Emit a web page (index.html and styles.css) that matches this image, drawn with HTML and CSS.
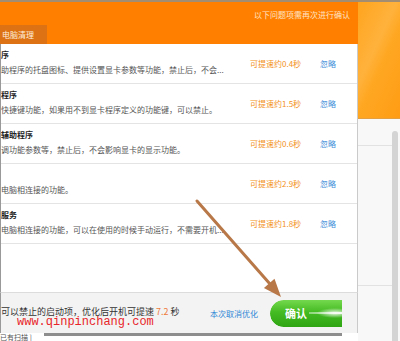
FILE: index.html
```html
<!DOCTYPE html>
<html lang="zh-CN">
<head>
    <meta charset="UTF-8">
    <title>开机加速</title>
    <link rel="stylesheet" href="styles.css">
</head>
<body>
    <div class="screen">
        <div class="main">
            <div class="dialog">
                <div class="dlg_head">
                    <p class="note">以下问题项需再次进行确认</p>
                    <div class="tab">电脑清理</div>
                </div>
                <div class="list">
                    <div class="row">
                        <div class="info">
                            <p class="name">序</p>
                            <p class="desc">助程序的托盘图标、提供设置显卡参数等功能，禁止后，不会...</p>
                        </div>
                        <span class="gain">可提速约0.4秒</span>
                        <a class="ignore">忽略</a>
                    </div>
                    <div class="row">
                        <div class="info">
                            <p class="name">程序</p>
                            <p class="desc">快捷键功能，如果用不到显卡程序定义的功能键，可以禁止。</p>
                        </div>
                        <span class="gain">可提速约1.5秒</span>
                        <a class="ignore">忽略</a>
                    </div>
                    <div class="row">
                        <div class="info">
                            <p class="name">辅助程序</p>
                            <p class="desc">调功能参数等，禁止后，不会影响显卡的显示功能。</p>
                        </div>
                        <span class="gain">可提速约0.6秒</span>
                        <a class="ignore">忽略</a>
                    </div>
                    <div class="row">
                        <div class="info">
                            <p class="name">&nbsp;</p>
                            <p class="desc">电脑相连接的功能。</p>
                        </div>
                        <span class="gain">可提速约2.9秒</span>
                        <a class="ignore">忽略</a>
                    </div>
                    <div class="row">
                        <div class="info">
                            <p class="name">服务</p>
                            <p class="desc">电脑相连接的功能，可以在使用的时候手动运行，不需要开机...</p>
                        </div>
                        <span class="gain">可提速约1.8秒</span>
                        <a class="ignore">忽略</a>
                    </div>
                </div>
                <div class="dlg_foot">
                    <p class="summary">可以禁止的启动项，优化后开机可提速 <em>7.2</em> 秒</p>
                    <a class="cancel">本次取消优化</a>
                    <div class="btn_wrap">
                        <button class="confirm">确认<i class="gleam"></i></button>
                    </div>
                </div>
                <div class="dlg_bottom">
                    <span class="label">已有扫描 ]</span>
                    <i class="rule"></i>
                </div>
            </div>
            <div class="side">
                <div class="side_head"></div>
                <div class="side_body">
                    <div class="side_rows">
                        <div class="srow srow_a"></div>
                        <div class="srow srow_b"></div>
                    </div>
                    <div class="scroll"></div>
                </div>
            </div>
        </div>
        <svg class="arrow" width="400" height="341" viewBox="0 0 400 341">
            <line x1="197" y1="201" x2="270" y2="284" stroke="#b97848" stroke-width="3" stroke-linecap="round"/>
            <polygon points="281,297 274.5,278.8 263.9,288" fill="#b97848"/>
        </svg>
        <p class="watermark">www.qinpinchang.com</p>
    </div>
</body>
</html>
```

FILE: styles.css
```css
body {
    margin: 0;
    font-family: "Noto Sans CJK SC", "Noto Sans", sans-serif;
}
p {
    margin: 0;
}
.screen {
    position: relative;
    width: 400px;
    height: 341px;
    overflow: hidden;
    background: #fff;
    border-top: 2px solid #a38d72;
    box-sizing: border-box;
    display: flex;
    flex-direction: column;
}
.main {
    flex: 1;
    display: flex;
    min-height: 0;
}
.dialog {
    width: 358px;
    display: flex;
    flex-direction: column;
}
.dlg_head {
    height: 42px;
    background: #ff8000;
    display: flex;
    flex-direction: column;
    justify-content: space-between;
}
.note {
    padding: 7px 8px 0 0;
    text-align: right;
    font-size: 8px;
    line-height: 12px;
    color: #ffe3c4;
}
.tab {
    width: 47px;
    height: 19px;
    padding-left: 2px;
    box-sizing: border-box;
    background: #dc7214;
    color: #ffeedd;
    font-size: 8px;
    line-height: 19px;
}
.list {
    flex: 1;
    background: #fff;
    border-left: 1px solid #999;
    border-right: 1px solid #cacaca;
}
.row {
    height: 40px;
    box-sizing: border-box;
    border-bottom: 1px solid #e4e4e4;
    display: flex;
    align-items: center;
}
.info {
    width: 249px;
    margin-bottom: 3px;
    overflow: hidden;
    white-space: nowrap;
}
.name {
    margin-bottom: 3px;
    font-size: 8px;
    line-height: 12px;
    font-weight: bold;
    color: #222;
}
.desc {
    font-size: 8px;
    line-height: 12px;
    color: #555;
}
.gain {
    width: 70px;
    font-size: 8px;
    color: #f39020;
}
.ignore {
    font-size: 8px;
    color: #3b8ad8;
}
.dlg_foot {
    height: 41px;
    box-sizing: border-box;
    background: #f3f3f3;
    border-top: 1px solid #dcdcdc;
    border-left: 1px solid #999;
    border-right: 1px solid #cacaca;
    display: flex;
    align-items: center;
}
.summary {
    width: 209px;
    margin-bottom: 2px;
    font-size: 9px;
    line-height: 10px;
    color: #333;
    white-space: nowrap;
}
.summary em {
    font-style: normal;
    color: #ee7a3c;
}
.cancel {
    width: 60px;
    font-size: 8px;
    color: #2f86d6;
}
.btn_wrap {
    width: 72px;
    height: 27px;
    overflow: hidden;
    border-radius: 14px 0 0 14px;
}
.confirm {
    width: 110px;
    height: 27px;
    padding: 0 0 0 15px;
    border: 0;
    border-radius: 14px;
    background: linear-gradient(#74d84e, #44bb22 45%, #2fa514);
    color: #fff;
    font-family: "Noto Sans CJK SC", sans-serif;
    font-size: 11px;
    font-weight: bold;
    display: flex;
    align-items: center;
}
.gleam {
    flex: 1;
    height: 10px;
    margin-left: 2px;
    background:
        linear-gradient(90deg, rgba(255,255,255,0.4), #fff 60%, #fff) center / 100% 2px no-repeat,
        radial-gradient(ellipse 18px 5px at 26px 50%, rgba(255,255,255,0.9), rgba(255,255,255,0));
}
.dlg_bottom {
    flex: 0 0 8px;
    display: flex;
    align-items: flex-start;
    background: #fff;
    overflow: hidden;
}
.label {
    width: 44px;
    font-size: 7px;
    line-height: 8px;
    color: #555;
    white-space: nowrap;
}
.rule {
    flex: 1;
    height: 3px;
    margin-right: 16px;
    background: #8e8e8e;
}
.side {
    flex: 1;
    display: flex;
    flex-direction: column;
}
.side_head {
    height: 116px;
    background: linear-gradient(115deg, #ffa41e 0%, #ffb23c 40%, #ffa722 55%, #ff9c14 100%);
    border-bottom: 1px solid #e4a040;
}
.side_body {
    flex: 1;
    display: flex;
    background: #f8f8f8;
}
.side_rows {
    flex: 1;
}
.srow {
    border-bottom: 1px solid #e2e2e2;
}
.srow_a {
    height: 26px;
}
.srow_b {
    height: 139px;
}
.scroll {
    width: 6px;
    margin: 12px 2px 0 0;
    background: #d4d4d4;
    border-radius: 3px 3px 0 0;
}
.arrow {
    position: absolute;
    left: 0;
    top: -2px;
    pointer-events: none;
}
.watermark {
    position: absolute;
    left: 17px;
    top: 315px;
    font-family: "Liberation Mono", monospace;
    font-size: 12px;
    line-height: 11px;
    color: #e8262a;
}
```
